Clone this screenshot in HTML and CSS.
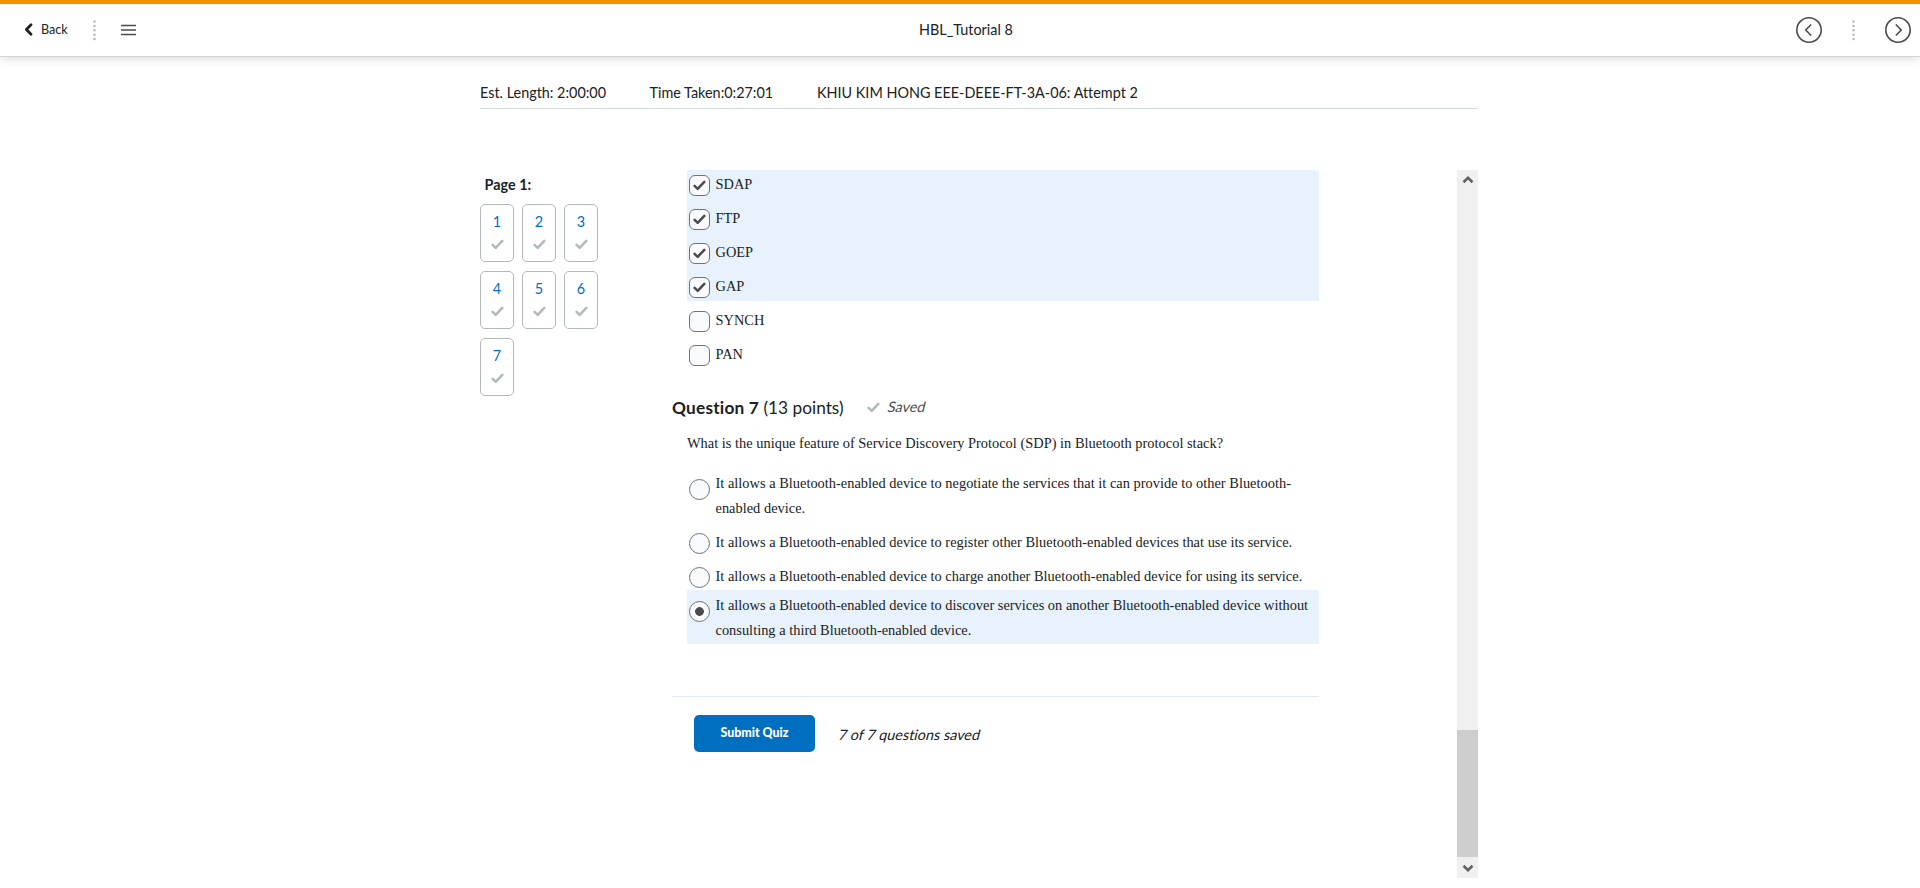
FILE: index.html
```html
<!DOCTYPE html>
<html lang="en">
<head>
<meta charset="utf-8">
<title>HBL_Tutorial 8</title>
<link rel="stylesheet" href="styles.css">
</head>
<body>
<svg class="defs" width="0" height="0">
  <symbol id="check" viewBox="0 0 13 11"><path d="M1.600 5.800 4.700 8.800 11.300 1.900" fill="none" stroke="currentColor" stroke-width="2.500" stroke-linecap="round" stroke-linejoin="round"/></symbol>
  <symbol id="dots" viewBox="0 0 3 21"><path d="M1.500 1.500v18" fill="none" stroke="#b1b9be" stroke-width="2.500" stroke-linecap="round" stroke-dasharray="0 4.400"/></symbol>
  <symbol id="chevron" viewBox="0 0 12 9"><path d="M1.500 7.200 6 2.800l4.500 4.400" fill="none" stroke="#606060" stroke-width="2.600"/></symbol>
</svg>
<header class="topbar">
  <div class="side">
    <svg class="back-arrow" viewBox="0 0 9 13"><path d="M7 1.700 2.400 6.500 7 11.300" fill="none" stroke="#202122" stroke-width="2.700" stroke-linecap="round" stroke-linejoin="round"/></svg>
    <span class="back">Back</span>
    <svg class="dots"><use href="#dots"/></svg>
    <svg class="menu" viewBox="0 0 15 12"><path d="M0 1.500h15M0 6h15M0 10.500h15" stroke="#494c4e" stroke-width="1.600"/></svg>
  </div>
  <h1 class="title">HBL_Tutorial 8</h1>
  <div class="side side-right">
    <svg class="circle" viewBox="0 0 26 26"><circle cx="13" cy="13" r="12.200"/><path d="M15.200 7.500 9.700 13l5.500 5.500"/></svg>
    <svg class="dots"><use href="#dots"/></svg>
    <svg class="circle" viewBox="0 0 26 26"><circle cx="13" cy="13" r="12.200"/><path d="M10.800 7.500l5.500 5.500-5.500 5.500"/></svg>
  </div>
</header>
<main class="page">
  <div class="info">
    <span>Est. Length: 2:00:00</span>
    <span>Time Taken:0:27:01</span>
    <span>KHIU KIM HONG EEE-DEEE-FT-3A-06: Attempt 2</span>
  </div>
  <div class="columns">
    <nav class="pages">
      <h2>Page 1:</h2>
      <div class="grid">
        <a class="num">1<svg class="ck"><use href="#check"/></svg></a>
        <a class="num">2<svg class="ck"><use href="#check"/></svg></a>
        <a class="num">3<svg class="ck"><use href="#check"/></svg></a>
        <a class="num">4<svg class="ck"><use href="#check"/></svg></a>
        <a class="num">5<svg class="ck"><use href="#check"/></svg></a>
        <a class="num">6<svg class="ck"><use href="#check"/></svg></a>
        <a class="num">7<svg class="ck"><use href="#check"/></svg></a>
      </div>
    </nav>
    <section class="quiz">
      <div class="options multi">
        <div class="option on"><span class="box"><svg class="ck"><use href="#check"/></svg></span><p>SDAP</p></div>
        <div class="option on"><span class="box"><svg class="ck"><use href="#check"/></svg></span><p>FTP</p></div>
        <div class="option on"><span class="box"><svg class="ck"><use href="#check"/></svg></span><p>GOEP</p></div>
        <div class="option on"><span class="box"><svg class="ck"><use href="#check"/></svg></span><p>GAP</p></div>
        <div class="option"><span class="box"></span><p>SYNCH</p></div>
        <div class="option"><span class="box"></span><p>PAN</p></div>
      </div>
      <div class="qhead"><h3><b>Question 7</b> (13 points)</h3><svg class="ck"><use href="#check"/></svg><span class="saved slant">Saved</span></div>
      <p class="prompt">What is the unique feature of Service Discovery Protocol (SDP) in Bluetooth protocol stack?</p>
      <div class="options single">
        <div class="option long"><span class="box round"></span><p>It allows a Bluetooth-enabled device to negotiate the services that it can provide to other Bluetooth-<br>enabled device.</p></div>
        <div class="option"><span class="box round"></span><p>It allows a Bluetooth-enabled device to register other Bluetooth-enabled devices that use its service.</p></div>
        <div class="option"><span class="box round"></span><p>It allows a Bluetooth-enabled device to charge another Bluetooth-enabled device for using its service.</p></div>
        <div class="option long on"><span class="box round dot"></span><p>It allows a Bluetooth-enabled device to discover services on another Bluetooth-enabled device without<br>consulting a third Bluetooth-enabled device.</p></div>
      </div>
      <footer class="submit"><button>Submit Quiz</button><span class="count slant">7 of 7 questions saved</span></footer>
    </section>
    <div class="scrollbar">
      <svg class="arrow" viewBox="0 0 12 9"><use href="#chevron"/></svg>
      <div class="thumb"></div>
      <svg class="arrow down" viewBox="0 0 12 9"><use href="#chevron"/></svg>
    </div>
  </div>
</main>
</body>
</html>
```
FILE: styles.css
```css
* { box-sizing: border-box; }
body { margin: 0; height: 888px; overflow: hidden; background: #fff; color: #202122; font-family: Lato, "Liberation Sans", sans-serif; font-size: 14.4px; font-variant-ligatures: none; display: flex; flex-direction: column; }
.defs { position: absolute; }
h1, h2, h3, p { margin: 0; font-weight: 400; }
svg { display: block; flex: none; }
.topbar { height: 57px; flex: none; border-top: 4px solid #f29100; border-bottom: 1px solid #d2d2d2; box-shadow: 0 2px 10px rgba(0,0,0,.13); display: grid; grid-template-columns: 919px 1fr 152px; align-items: center; }
.side { display: flex; align-items: center; padding-left: 24px; }
.back-arrow { width: 9px; height: 13px; margin-bottom: 1px; }
.back { font-size: 12.6px; margin-left: 8px; width: 27px; padding-bottom: 2px; }
.dots { width: 3px; height: 21px; }
.side > .dots { margin-left: 24.5px; }
.menu { width: 15px; height: 12px; margin-left: 25.5px; }
.title { font-size: 14.4px; line-height: 20px; padding-bottom: 1px; }
.side-right { padding-left: 27.5px; }
.side-right > .dots { margin: 0 30px 0 30.5px; }
.circle { width: 26px; height: 26px; fill: none; stroke: #494c4e; stroke-width: 1.6; }
.page { width: 998px; margin-left: 480px; display: flex; flex-direction: column; }
.info { height: 52px; border-bottom: 1px solid #d3dbe2; display: grid; grid-template-columns: 169.5px 167.5px 1fr; padding-top: 26px; line-height: 20px; }
.columns { margin-top: 61px; height: 708px; display: grid; grid-template-columns: 192px 647px 1fr; }
.pages { padding-top: 5px; }
.pages h2 { font-size: 14.4px; font-weight: 700; line-height: 20px; padding-left: 4.5px; }
.grid { margin-top: 9px; display: grid; grid-template-columns: repeat(3, 34px); grid-auto-rows: 58px; gap: 9px 8px; }
.num { border: 1px solid #b1b9be; border-radius: 5px; color: #006fbf; line-height: 20px; display: flex; flex-direction: column; align-items: center; padding: 7px 0 0; }
.ck { width: 13px; height: 11px; color: #b1b9be; }
.num .ck { margin-top: 7px; }
.options { margin-left: 15px; font-family: "Liberation Serif", serif; line-height: 25px; letter-spacing: .012px; }
.multi { margin-top: -5px; clip-path: inset(5px 0 0 0); }
.option { height: 34px; display: flex; padding-left: 2.3px; }
.option p { padding: 7px 0 0 5.2px; white-space: nowrap; }
.single .option p { padding-top: 8px; }
.single .long { height: 54px; }
.single .long p { padding-top: 3px; }
.on { background: #e8f2fc; }
.box { width: 21px; height: 21px; margin-top: 10px; border: 1px solid #6e7376; border-radius: 6px; background: #f9fbff; display: grid; place-items: center; }
.box .ck { color: #494c4e; }
.single .box { margin-top: 10.5px; }
.round { border-radius: 50%; }
.dot { background: radial-gradient(circle, #494c4e 4px, #f9fbff 4.700px); }
.qhead { display: flex; align-items: center; height: 30px; margin-top: 23px; }
.qhead h3 { font-size: 17.28px; width: 195px; white-space: nowrap; }
.qhead b { letter-spacing: .2px; }
.slant { transform: skewX(-14deg); }
.saved { margin-left: 8px; color: #494c4e; padding-bottom: 1px; }
.prompt { margin: 9px 0 0 15px; font-family: "Liberation Serif", serif; line-height: 25px; letter-spacing: .01px; white-space: nowrap; }
.single { margin-top: 12px; }
.submit { margin-top: 52px; border-top: 1px solid #e3e9f1; padding: 18px 0 0 22px; display: flex; }
button { width: 121px; height: 37px; border: 0; border-radius: 5px; background: #006fbf; color: #fff; font: 900 12.4px Lato, sans-serif; padding: 0 0 2px; }
.count { margin: 10px 0 0 23.5px; line-height: 20px; height: 20px; }
.scrollbar { justify-self: end; width: 21px; background: #f0f0f0; display: flex; flex-direction: column; align-items: center; }
.arrow { width: 12px; height: 9px; margin-top: 5px; }
.thumb { width: 21px; height: 127px; margin-top: 546px; background: #cdcdcd; }
.down { transform: scaleY(-1); margin-top: 7px; }
```
